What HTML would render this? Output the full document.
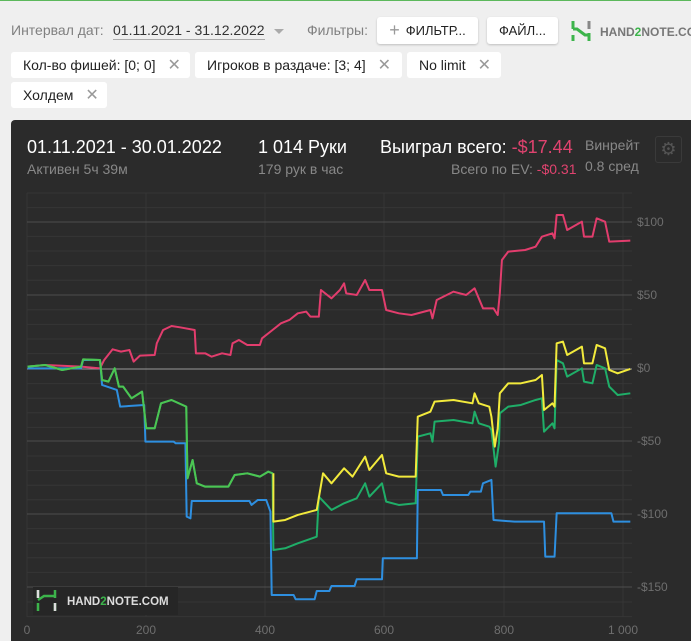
<!DOCTYPE html>
<html><head><meta charset="utf-8"><style>
*{margin:0;padding:0;box-sizing:border-box}
body{width:691px;height:641px;overflow:hidden;background:#efefef;font-family:"Liberation Sans",sans-serif;position:relative;color:#222}
.a{position:absolute;white-space:nowrap}
.btn{position:absolute;background:#fff;border-radius:3px;box-shadow:0 1px 2px rgba(0,0,0,.2);font-size:13px;color:#222;display:flex;align-items:center;justify-content:center}
.chip{position:absolute;background:#fff;border-radius:3px;font-size:14px;color:#222;display:flex;align-items:center;padding-left:12px;height:26px}
.chip span{color:#999;margin-left:12px;font-size:16px}
</style></head><body>
<div class="a" style="left:0;top:0;width:691px;height:1px;background:#5cb85c"></div>
<div class="a" style="left:11px;top:22px;font-size:14px;color:#808080">Интервал дат:</div>
<div class="a" style="left:113px;top:22px;font-size:14px;color:#333;border-bottom:1px solid #aaa;padding-bottom:1px">01.11.2021 - 31.12.2022</div>
<div class="a" style="left:274px;top:29px;width:0;height:0;border-left:5px solid transparent;border-right:5px solid transparent;border-top:5px solid #aaa"></div>
<div class="a" style="left:307px;top:22px;font-size:14px;color:#808080">Фильтры:</div>
<div class="btn" style="left:377px;top:17px;width:101px;height:27px"><span style="color:#999;font-size:18px;margin-right:6px">+</span>ФИЛЬТР...</div>
<div class="btn" style="left:487px;top:17px;width:71px;height:27px">ФАЙЛ...</div>
<svg class="a" style="left:571px;top:19px" width="20" height="24"><path d="M2 2v8M2 10h4l8 6h4M18 14v8" stroke="#3cb44b" stroke-width="3" fill="none"/><path d="M18 2v8" stroke="#888" stroke-width="3"/><path d="M2 16v6" stroke="#3cb44b" stroke-width="3"/></svg>
<div class="a" style="left:600px;top:25px;font-size:12px;font-weight:bold;color:#777">HAND<span style="color:#3cb44b">2</span>NOTE.COM</div>
<div class="chip" style="left:11px;top:52px;width:179px">Кол-во фишей: [0; 0]<span>✕</span></div>
<div class="chip" style="left:195px;top:52px;width:207px">Игроков в раздаче: [3; 4]<span>✕</span></div>
<div class="chip" style="left:407px;top:52px;width:94px">No limit<span>✕</span></div>
<div class="chip" style="left:11px;top:82px;width:96px">Холдем<span>✕</span></div>
<div class="a" style="left:11px;top:120px;width:680px;height:521px;background:#2b2b2b;border-radius:4px 0 0 0"></div>
<div class="a" style="left:27px;top:137px;font-size:18px;color:#fff">01.11.2021 - 30.01.2022</div>
<div class="a" style="left:27px;top:161px;font-size:14px;color:#888">Активен 5ч 39м</div>
<div class="a" style="left:258px;top:137px;font-size:18px;color:#fff">1 014 Руки</div>
<div class="a" style="left:258px;top:161px;font-size:14px;color:#888">179 рук в час</div>
<div class="a" style="left:380px;top:137px;font-size:18px;color:#fff">Выиграл всего: <span style="color:#e0436f">-$17.44</span></div>
<div class="a" style="left:451px;top:161px;font-size:14px;color:#888">Всего по EV: <span style="color:#e0436f">-$0.31</span></div>
<div class="a" style="left:585px;top:137px;font-size:14px;color:#888">Винрейт</div>
<div class="a" style="left:585px;top:158px;font-size:14px;color:#888">0.8 сред</div>
<div class="a" style="left:655px;top:136px;width:27px;height:27px;border:1px solid #3a3a3a;border-radius:3px;color:#555;font-size:18px;text-align:center;line-height:25px">⚙</div>
<svg class="a" style="left:0;top:0" width="691" height="641">
<g stroke="#363636" stroke-width="1">
<path d="M27 193H632M27 207.6H632M27 236.4H632M27 251H632M27 265.6H632M27 280.2H632M27 309.8H632M27 324.4H632M27 339H632M27 353.6H632M27 383.6H632M27 398.2H632M27 412.8H632M27 427.4H632M27 456H632M27 470.6H632M27 485.2H632M27 499.8H632M27 528.6H632M27 543.2H632M27 557.8H632M27 572.4H632M27 602H632M27 616.6H632"/>
<path d="M27 193V617M146 193V617M265 193V617M384 193V617M504 193V617M623 193V617"/>
</g>
<g stroke="#4e4e4e"><path d="M27 222H632M27 295H632M27 441H632M27 514H632M27 587H632"/></g>
<path d="M27 369H632" stroke="#9a9a9a"/>
<g font-family="Liberation Sans" font-size="12" fill="#6e6e6e">
<text x="637" y="226">$100</text><text x="637" y="299">$50</text><text x="637" y="372">$0</text><text x="637" y="445">-$50</text><text x="637" y="518">-$100</text><text x="637" y="591">-$150</text>
<text x="27" y="634" text-anchor="middle">0</text><text x="146" y="634" text-anchor="middle">200</text><text x="265" y="634" text-anchor="middle">400</text><text x="384" y="634" text-anchor="middle">600</text><text x="504" y="634" text-anchor="middle">800</text><text x="623" y="634" text-anchor="middle">1 000</text>
</g>
<g transform="translate(20,190) scale(0.4209,0.3333)" fill="none" stroke-width="2" stroke-linejoin="round">
<path vector-effect="non-scaling-stroke" stroke="#e23d6d" d="M18 530L60 525L145 530L190 535L200 510L220 478L240 485L260 480L270 515L285 497L320 495L325 460L340 420L360 408L380 412L415 420L418 490L440 490L455 500L480 490L500 495L505 460L520 450L540 465L570 465L575 445L600 420L620 400L640 390L660 370L680 365L690 380L710 380L715 300L740 325L760 300L770 280L775 310L800 315L820 270L830 300L860 300L870 360L900 370L930 375L975 360L980 385L990 330L1030 305L1060 315L1080 295L1090 325L1100 355L1125 355L1135 375L1140 310L1145 210L1160 185L1200 180L1225 170L1240 140L1265 130L1270 145L1275 75L1290 75L1300 120L1335 95L1340 140L1360 140L1370 85L1390 95L1400 155L1450 152"/>
<path vector-effect="non-scaling-stroke" stroke="#2e8fe0" d="M18 535L145 535L150 510L190 510L195 585L230 600L238 650L295 645L298 755L365 755L370 760L393 760L396 980L405 985L408 933L545 933L550 945L565 930L585 930L595 965L598 1215L650 1215L655 1228L700 1228L705 1203L735 1203L740 1188L795 1188L800 1168L860 1168L862 1105L943 1105L945 900L1000 900L1005 915L1065 915L1070 905L1095 905L1100 880L1120 870L1125 990L1175 995L1245 995L1248 1100L1270 1100L1275 970L1405 970L1410 995L1450 995"/>
<path vector-effect="non-scaling-stroke" stroke="#1fae68" d="M18 530L60 525L100 540L145 530L150 508L190 510L195 570L210 575L225 535L235 590L245 590L265 625L290 605L300 715L320 715L335 640L360 630L395 650L398 865L410 810L420 880L440 890L495 890L510 855L540 850L570 860L590 845L600 850L602 1080L630 1075L660 1060L705 1040L710 920L740 960L770 940L800 925L820 880L830 920L860 880L870 935L900 945L940 940L945 740L975 730L980 755L985 695L1030 690L1075 700L1080 665L1090 700L1115 710L1120 720L1130 830L1138 760L1140 670L1160 650L1190 645L1225 630L1240 625L1245 725L1265 700L1270 715L1275 510L1290 520L1300 560L1335 535L1340 575L1360 580L1370 525L1390 535L1400 590L1420 615L1450 610"/>
<path vector-effect="non-scaling-stroke" stroke="#f2ea3c" d="M602 850L602 995L630 990L660 975L705 960L720 850L740 880L770 835L790 860L820 800L830 840L860 795L870 850L900 860L940 860L945 680L975 665L985 635L1030 630L1075 640L1080 610L1090 640L1115 650L1120 680L1128 770L1135 715L1140 610L1160 580L1190 580L1225 570L1240 555L1245 660L1265 640L1270 650L1275 460L1290 455L1300 495L1335 470L1340 520L1360 520L1370 465L1390 475L1400 540L1420 550L1450 537"/>
<path vector-effect="non-scaling-stroke" stroke="#4cc552" d="M18 530L60 525L100 540L145 530L150 508L190 510L195 570L210 575L225 535L235 590L245 590L265 625L290 605L300 715L320 715L335 640L360 630L395 650L398 865L410 810L420 880L440 890L495 890L510 855L540 850L570 860L590 845L600 850"/>
</g>
<rect x="33" y="587" width="145" height="28" fill="#262626"/>
<path d="M38 590v8M38 603v8M38 600l6-4h11M55 590v8M55 603v8" stroke="#3cb44b" stroke-width="2.5" fill="none"/>
<path d="M38 590v8M55 603v8" stroke="#ddd" stroke-width="2.5"/>
<text x="67" y="605" font-family="Liberation Sans" font-size="11.5" font-weight="bold" fill="#ddd">HAND<tspan fill="#3cb44b">2</tspan>NOTE.COM</text>
</svg>
</body></html>
